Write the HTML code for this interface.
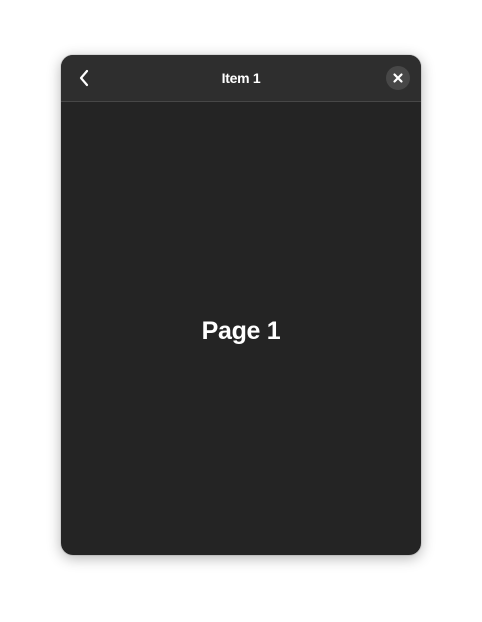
<!DOCTYPE html>
<html><head><style>
html,body{margin:0;padding:0;width:482px;height:622px;background:#fff;overflow:hidden;font-family:"Liberation Sans","DejaVu Sans",sans-serif}
.win{position:absolute;left:61px;top:55px;width:360px;height:500px;border-radius:12px;background:#242424;overflow:hidden;box-shadow:0 3px 14px rgba(0,0,0,0.3),0 0 0 1px rgba(0,0,0,0.08)}
.hdr{position:absolute;left:0;top:0;width:360px;height:46px;background:#2e2e2e;border-bottom:1px solid #474747}
.title{position:absolute;left:0;right:0;top:15px;text-align:center;color:#fff;font-weight:bold;font-size:14px;letter-spacing:-0.3px}
.close{position:absolute;left:325px;top:11px;width:24px;height:24px;border-radius:50%;background:#474747}
.page{position:absolute;left:0;right:0;top:262px;text-align:center;color:#fff;font-weight:bold;font-size:25px;letter-spacing:-0.3px}
</style></head><body>
<div class="win">
<div class="hdr">
<svg style="position:absolute;left:17px;top:14px" width="12" height="18" viewBox="0 0 12 18"><path d="M9 2 L3 9 L9 16" stroke="#fff" stroke-width="2.2" fill="none" stroke-linecap="round" stroke-linejoin="round"/></svg>
<div class="title">Item 1</div>
<div class="close"><svg width="24" height="24" viewBox="0 0 24 24"><path d="M8.5 8.5 L15.5 15.5 M15.5 8.5 L8.5 15.5" stroke="#fff" stroke-width="2.2" stroke-linecap="round"/></svg></div>
</div>
<div class="page">Page 1</div>
</div>
</body></html>
